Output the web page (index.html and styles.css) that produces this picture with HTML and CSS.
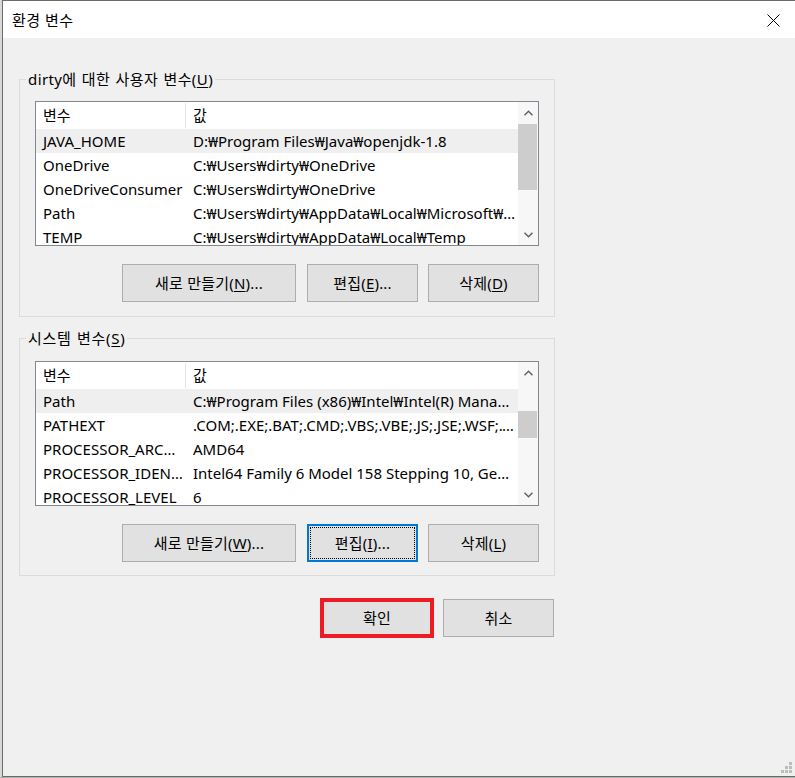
FILE: index.html
```html
<!DOCTYPE html>
<html lang="ko">
<head>
<meta charset="utf-8">
<title>환경 변수</title>
<link rel="stylesheet" href="styles.css">
</head>
<body>
<div class="desktop">
  <div class="window">
    <div class="titlebar">
      <span class="title">환경 변수</span>
      <svg class="close" width="13" height="13" viewBox="0 0 13 13" aria-label="닫기">
        <path d="M0.5 0.5 L12.5 12.5 M12.5 0.5 L0.5 12.5" stroke="#000" stroke-width="1" fill="none"/>
      </svg>
    </div>

    <div class="client">
      <fieldset class="group">
        <legend>dirty에 대한 사용자 변수(<u>U</u>)</legend>
        <div class="group-body">
          <div class="listview">
            <div class="lv-body">
              <div class="lv-header">
                <div class="cell name">변수</div>
                <div class="cell value">값</div>
              </div>
              <div class="lv-row selected"><div class="cell name">JAVA_HOME</div><div class="cell value">D:₩Program Files₩Java₩openjdk-1.8</div></div>
              <div class="lv-row"><div class="cell name">OneDrive</div><div class="cell value">C:₩Users₩dirty₩OneDrive</div></div>
              <div class="lv-row"><div class="cell name">OneDriveConsumer</div><div class="cell value">C:₩Users₩dirty₩OneDrive</div></div>
              <div class="lv-row"><div class="cell name">Path</div><div class="cell value">C:₩Users₩dirty₩AppData₩Local₩Microsoft₩WindowsApps;</div></div>
              <div class="lv-row"><div class="cell name">TEMP</div><div class="cell value">C:₩Users₩dirty₩AppData₩Local₩Temp</div></div>
            </div>
            <div class="scrollbar">
              <div class="sb-arrow">
                <svg width="9" height="6" viewBox="0 0 9 6"><polyline points="0.5,5.3 4.5,1.2 8.5,5.3" fill="none" stroke="#606060" stroke-width="1.4"/></svg>
              </div>
              <div class="sb-track">
                <div class="sb-thumb" style="margin-top:1px;height:66px"></div>
              </div>
              <div class="sb-arrow">
                <svg width="9" height="6" viewBox="0 0 9 6"><polyline points="0.5,0.7 4.5,4.8 8.5,0.7" fill="none" stroke="#606060" stroke-width="1.4"/></svg>
              </div>
            </div>
          </div>
          <div class="btn-row">
            <button class="btn btn-wide">새로 만들기(<u>N</u>)...</button>
            <button class="btn">편집(<u>E</u>)...</button>
            <button class="btn">삭제(<u>D</u>)</button>
          </div>
        </div>
      </fieldset>

      <fieldset class="group group-system">
        <legend>시스템 변수(<u>S</u>)</legend>
        <div class="group-body">
          <div class="listview">
            <div class="lv-body">
              <div class="lv-header">
                <div class="cell name">변수</div>
                <div class="cell value">값</div>
              </div>
              <div class="lv-row selected"><div class="cell name">Path</div><div class="cell value">C:₩Program Files (x86)₩Intel₩Intel(R) Management Engine Components₩iCLS₩;</div></div>
              <div class="lv-row"><div class="cell name">PATHEXT</div><div class="cell value">.COM;.EXE;.BAT;.CMD;.VBS;.VBE;.JS;.JSE;.WSF;.WSH;.MSC</div></div>
              <div class="lv-row"><div class="cell name">PROCESSOR_ARCHITECTURE</div><div class="cell value">AMD64</div></div>
              <div class="lv-row"><div class="cell name">PROCESSOR_IDENTIFIER</div><div class="cell value">Intel64 Family 6 Model 158 Stepping 10, GenuineIntel</div></div>
              <div class="lv-row"><div class="cell name">PROCESSOR_LEVEL</div><div class="cell value">6</div></div>
            </div>
            <div class="scrollbar">
              <div class="sb-arrow">
                <svg width="9" height="6" viewBox="0 0 9 6"><polyline points="0.5,5.3 4.5,1.2 8.5,5.3" fill="none" stroke="#606060" stroke-width="1.4"/></svg>
              </div>
              <div class="sb-track">
                <div class="sb-thumb" style="margin-top:28px;height:27px"></div>
              </div>
              <div class="sb-arrow">
                <svg width="9" height="6" viewBox="0 0 9 6"><polyline points="0.5,0.7 4.5,4.8 8.5,0.7" fill="none" stroke="#606060" stroke-width="1.4"/></svg>
              </div>
            </div>
          </div>
          <div class="btn-row">
            <button class="btn btn-wide">새로 만들기(<u>W</u>)...</button>
            <button class="btn focused">편집(<u>I</u>)...</button>
            <button class="btn">삭제(<u>L</u>)</button>
          </div>
        </div>
      </fieldset>

      <div class="dialog-buttons">
        <button class="btn btn-ok">확인</button>
        <button class="btn">취소</button>
      </div>
    </div>

    <svg class="grip" width="12" height="12" viewBox="0 0 12 12">
      <rect x="8" y="0" width="3" height="3" fill="#bcbcbc"/>
      <rect x="4" y="4" width="3" height="3" fill="#bcbcbc"/>
      <rect x="8" y="4" width="3" height="3" fill="#bcbcbc"/>
      <rect x="0" y="8" width="3" height="3" fill="#bcbcbc"/>
      <rect x="4" y="8" width="3" height="3" fill="#bcbcbc"/>
      <rect x="8" y="8" width="3" height="3" fill="#bcbcbc"/>
    </svg>
  </div>
</div>
</body>
</html>
```

FILE: styles.css
```css
* {
  box-sizing: border-box;
}

html,
body {
  margin: 0;
  padding: 0;
}

body {
  width: 795px;
  height: 778px;
  overflow: hidden;
  background: #a7b5ad;
  font-family: "Noto Sans", "Noto Sans CJK KR", sans-serif;
  font-size: 15px;
  color: #000;
}

/* strip of the desktop visible left of the dialog */
.desktop {
  height: 777px;
  padding-left: 2px;
  background: #d8d8d8;
}

.window {
  position: relative;
  width: 793px;
  height: 777px;
  border: 1px solid #6b6b6b;
  border-right: 0;
  background: #f0f0f0;
  display: flex;
  flex-direction: column;
}

/* title bar */
.titlebar {
  height: 37px;
  flex: none;
  background: #fff;
  display: flex;
  align-items: center;
  justify-content: space-between;
  padding: 0 15px 0 9px;
}

.title {
  font-family: "Noto Sans CJK KR", sans-serif;
  font-size: 15px;
  line-height: 20px;
  letter-spacing: 0.4px;
}

.close {
  display: block;
  margin-top: 1px;
}

/* dialog body */
.client {
  padding-left: 16px;
  display: flex;
  flex-direction: column;
  align-items: flex-start;
}

.group {
  width: 536px;
  margin: 31px 0 0;
  padding: 0;
  border: 1px solid #dcdcdc;
  min-width: 0;
}

.group-system {
  margin-top: 11px;
}

.group legend {
  margin-left: 6px;
  padding: 0 2px;
  line-height: 20px;
  font-size: 15px;
  letter-spacing: 0.4px;
  word-spacing: 1px;
}

.group-system legend {
  letter-spacing: 0.7px;
}

u {
  text-decoration-thickness: 1px;
  text-underline-offset: 2px;
}

.group-body {
  padding: 12px 15px 14px 15px;
}

.group-system .group-body {
  padding-top: 13px;
  padding-bottom: 13px;
}

/* list view */
.listview {
  height: 145px;
  border: 1px solid #828790;
  background: #fff;
  display: flex;
  overflow: hidden;
}

.lv-body {
  flex: 1;
  min-width: 0;
  overflow: hidden;
}

.lv-header,
.lv-row {
  display: flex;
}

.lv-header {
  height: 27px;
  align-items: center;
}

.lv-header .cell {
  height: 25px;
  line-height: 25px;
}

.lv-header .name {
  padding-left: 8px;
  border-right: 1px solid #e5e5e5;
}

.lv-header .value {
  padding-left: 7px;
}

.lv-row {
  height: 24px;
  line-height: 24px;
}

.lv-row.selected {
  background: #efefef;
}

.cell {
  white-space: nowrap;
  overflow: hidden;
  text-overflow: ellipsis;
}

.cell.name {
  width: 150px;
  flex: none;
  padding: 0 0 0 7px;
}

.cell.value {
  flex: 1;
  min-width: 0;
  padding: 0 2px 0 7px;
}

/* vertical scroll bar */
.scrollbar {
  width: 20px;
  flex: none;
  background: #f7f7f7;
  display: flex;
  flex-direction: column;
}

.sb-arrow {
  height: 21px;
  flex: none;
  display: flex;
  align-items: center;
  justify-content: center;
}

.sb-arrow svg {
  display: block;
}

.sb-track {
  flex: 1;
  padding: 0 1px 0 0;
}

.sb-thumb {
  background: #cdcdcd;
}

/* push buttons */
.btn-row {
  margin-top: 18px;
  display: flex;
  justify-content: flex-end;
  gap: 10px;
}

.btn {
  position: relative;
  width: 111px;
  height: 38px;
  margin: 0;
  padding: 0;
  border: 1px solid #adadad;
  background: #e1e1e1;
  font-family: "Noto Sans", "Noto Sans CJK KR", sans-serif;
  font-size: 15px;
  line-height: 20px;
  letter-spacing: 0.2px;
  color: #000;
}

.btn-wide {
  width: 174px;
  margin-right: 1px;
}

.btn.focused {
  border: 2px solid #0078d7;
}

.btn.focused::after {
  content: "";
  position: absolute;
  inset: 1px;
  border: 1px dotted #000;
}

.dialog-buttons {
  width: 536px;
  margin-top: 23px;
  padding-right: 1px;
  display: flex;
  justify-content: flex-end;
  gap: 10px;
}

.btn-ok {
  width: 112px;
  outline: 4px solid #ed1c24;
  outline-offset: -3px;
}

.grip {
  position: absolute;
  right: 2px;
  bottom: 2px;
}
```
